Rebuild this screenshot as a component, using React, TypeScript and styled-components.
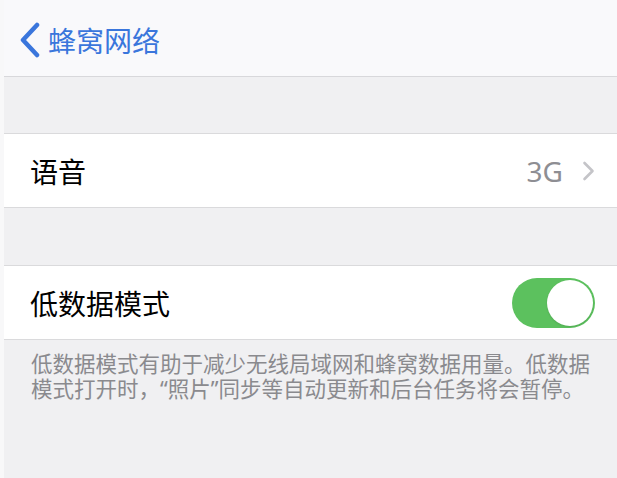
import React from "react";
import styled, { createGlobalStyle } from "styled-components";

const Global = createGlobalStyle`
  html, body { margin: 0; padding: 0; background: #f8f8f9; }
  body { font-family: "Noto Sans CJK SC", "Noto Sans", sans-serif; -webkit-font-smoothing: antialiased; }
`;

const Screen = styled.div`
  margin-left: 4px;
  min-height: 478px;
  background: #f0f0f2;
  display: flex;
  flex-direction: column;
`;

const NavBar = styled.header`
  height: 77px;
  box-sizing: border-box;
  background: #f9f9fb;
  border-bottom: 1px solid #d8d8db;
  display: flex;
  align-items: center;
  padding: 3px 0 0 16px;
`;

const BackButton = styled.button`
  display: flex;
  align-items: center;
  gap: 6px;
  border: 0;
  background: none;
  padding: 0;
  color: #3a76dc;
  font-family: "Noto Sans CJK SC", sans-serif;
  font-size: 28px;
  line-height: 1;
  cursor: pointer;
`;

const Spacer = styled.div<{ $h: number }>`
  height: ${(p) => p.$h}px;
`;

const Group = styled.section`
  background: #ffffff;
  border-top: 1px solid #dadadc;
  border-bottom: 1px solid #dadadc;
`;

const Row = styled.div`
  height: 73px;
  display: flex;
  align-items: center;
  justify-content: space-between;
  padding: 0 22px 0 26px;
`;

const Label = styled.span`
  font-family: "Noto Sans CJK SC", sans-serif;
  font-size: 28px;
  line-height: 1;
  color: #000;
`;

const Detail = styled.div`
  display: flex;
  align-items: center;
  gap: 19px;
`;

const Value = styled.span`
  font-family: "Noto Sans", "Liberation Sans", sans-serif;
  font-size: 28px;
  color: #8e8e93;
`;

const Toggle = styled.div<{ $on: boolean }>`
  width: 83px;
  height: 50px;
  box-sizing: border-box;
  border-radius: 25px;
  padding: 2px;
  background: ${(p) => (p.$on ? "#5cc15e" : "#e5e5ea")};
  display: flex;
  justify-content: ${(p) => (p.$on ? "flex-end" : "flex-start")};
`;

const Knob = styled.div`
  width: 46px;
  height: 46px;
  border-radius: 50%;
  background: #ffffff;
  box-shadow: 0 1px 2px rgba(0, 0, 0, 0.12);
`;

const Footnote = styled.p`
  margin: 0;
  padding: 11px 17px 0 27px;
  font-family: "Noto Sans", "Noto Sans CJK SC", sans-serif;
  font-size: 21.5px;
  line-height: 25px;
  color: #8a8a8e;
`;

const BackIcon = () => (
  <svg width="22" height="36" viewBox="0 0 22 36" fill="none">
    <path d="M17 3 L3 18 L17 33" stroke="#3a76dc" strokeWidth="4.5" strokeLinecap="round" strokeLinejoin="round" />
  </svg>
);

const Chevron = () => (
  <svg width="13" height="20" viewBox="0 0 13 20" fill="none">
    <path d="M2.5 2 L10.5 10 L2.5 18" stroke="#c4c4c8" strokeWidth="2.6" strokeLinecap="round" strokeLinejoin="round" />
  </svg>
);

export default function App() {
  return (
    <>
      <Global />
      <Screen>
        <NavBar>
          <BackButton>
            <BackIcon />
            <span>蜂窝网络</span>
          </BackButton>
        </NavBar>
        <Spacer $h={56} />
        <Group>
          <Row>
            <Label>语音</Label>
            <Detail>
              <Value>3G</Value>
              <Chevron />
            </Detail>
          </Row>
        </Group>
        <Spacer $h={57} />
        <Group>
          <Row>
            <Label>低数据模式</Label>
            <Toggle $on={true}>
              <Knob />
            </Toggle>
          </Row>
        </Group>
        <Footnote>
          低数据模式有助于减少无线局域网和蜂窝数据用量。低数据模式打开时，“照片”同步等自动更新和后台任务将会暂停。
        </Footnote>
      </Screen>
    </>
  );
}
